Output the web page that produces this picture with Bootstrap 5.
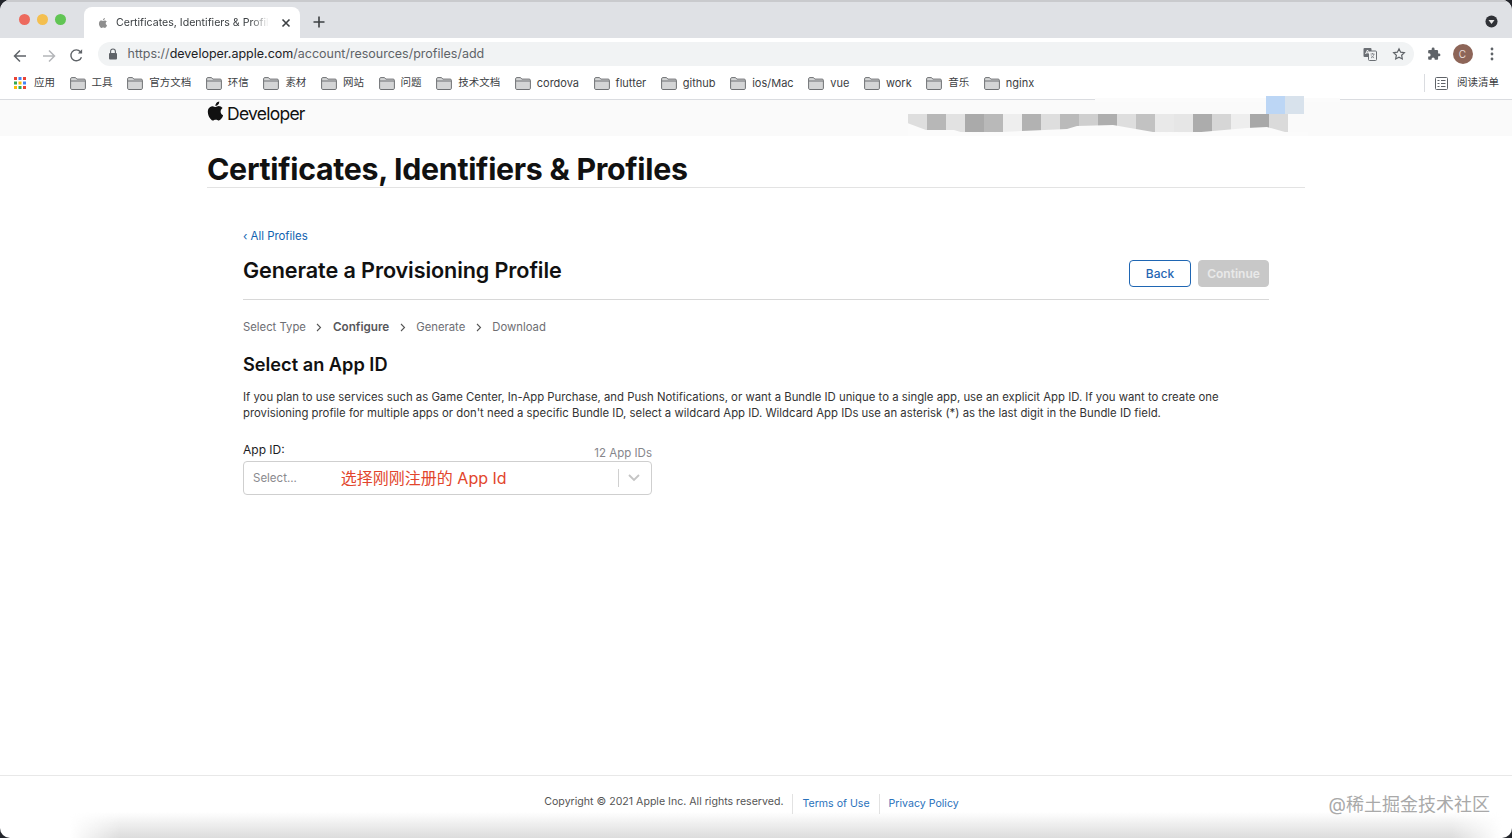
<!DOCTYPE html>
<html lang="zh">
<head>
<meta charset="utf-8">
<title>Certificates, Identifiers &amp; Profiles</title>
<link href="https://cdn.jsdelivr.net/npm/bootstrap@5.3.0/dist/css/bootstrap.min.css" rel="stylesheet">
<style>
html,body{height:838px;overflow:hidden;background:#23252b}
body{font-family:Inter,"Noto Sans CJK SC",sans-serif;color:#1d1d1f}
.win{height:838px;border-radius:10px;overflow:hidden;background:#fff;position:relative}
.tabstrip{height:38px;background:#dfe1e5;border-top:2px solid #c9cacd}
.lights{width:84px;padding-left:18.5px;gap:7px;padding-bottom:1px}
.lights i{width:11px;height:11px;border-radius:50%;display:block}
.tabx{width:216px;height:31px;background:#fff;border-radius:8px 8px 0 0;margin-top:5px;padding:0 9px 0 13px;font-size:10.6px;color:#3c4043}
.tabtitle{white-space:nowrap;-webkit-mask-image:linear-gradient(90deg,#000 88%,transparent);mask-image:linear-gradient(90deg,#000 88%,transparent)}
.stripplus{margin-left:12px;margin-top:4px}
.stripdown{margin-right:14px;margin-top:2px}
.toolbar{height:32px;background:#fff;padding-left:12px}
.navbtn{width:28.5px}
.omni{width:1316px;height:24px;border-radius:12px;background:#f1f3f4;padding:0 8px 0 10px;font-size:12.5px;color:#5f6368}
.omni b{font-weight:400;color:#202124}
.omnitext{margin-left:2px}
.bmbar{height:30px;background:#fff;border-bottom:1px solid #dadce0;padding:0 13px 3px 14px;font-size:10.5px;color:#3c4043;gap:14.6px}
.bmbar span{white-space:nowrap}
.bmbar span.latin{font-size:11px}
.bmk{gap:6px}
.readl{gap:9px;border-left:1px solid #dadce0;padding-left:10px;height:18px}
.devbar{height:36px;background:#fafafa;position:relative}
.devinner{width:1098px;height:28px;font-size:17.5px;letter-spacing:-.75px;color:#111;gap:3px}
.mosaic{position:absolute;left:908px;top:-4px;width:400px;height:40px}
.mosaic::before{content:"";position:absolute;left:187px;top:2px;width:245px;height:4px;background:#fbfbfb}
.mrow{display:flex;height:18px;position:relative}
.mrow i{display:block;width:19px;height:18px}
.blur1{margin-left:358px}
.wave{position:absolute;left:0;top:0}
.pagehead{width:1098px;height:52px;border-bottom:1px solid #e3e3e3}
.pagehead h1{font-size:30.3px;font-weight:700;line-height:1;letter-spacing:-.29px;margin:0;color:#111;padding-top:18px}
.inner{width:1026px}
.backl{font-size:11.4px;line-height:16px;color:#0f62b0;padding-top:40px;display:block;text-decoration:none}
.headrow{height:56px;border-bottom:1px solid #d8d8d8}
.headrow h2{font-size:21.6px;font-weight:600;line-height:1;margin:0;padding-top:16px;color:#111;letter-spacing:-.1px}
.btnback,.btncont{font-size:12px;line-height:1;font-weight:500;height:27px;border-radius:4px;padding:0;margin-top:16px}
.btnback{width:62px;border:1px solid #1f66b3;color:#1f66b3;background:#fff}
.btn.btncont:disabled{width:71px;border:1px solid #c8c8c8;background:#c8c8c8;color:#e9e9e9;font-weight:600;opacity:1}
.btngap{gap:7px}
.stepz{height:55px;font-size:11.3px;color:#6e6e73}
.stepz strong{font-weight:600;color:#57575b;font-size:11.7px}
.stepz svg{margin:0 10.5px}
.h3x{font-size:18.2px;font-weight:600;line-height:1;margin:0;color:#111}
.para{font-size:11.35px;line-height:16px;margin:16px 0 0;color:#333}
.fieldtop{margin-top:20px;width:409px;height:20px;font-size:12px}
.fieldtop em{font-style:normal;font-size:11.5px;color:#86868b;padding-top:4px}
.selectbox{width:409px;height:34px;border:1px solid #cfcfcf;border-radius:4px;padding-left:9px;font-size:11.5px;color:#8a8a8e}
.redtext{font-size:16px;color:#e2452c;margin-left:44px}
.selsep{width:1px;height:18px;background:#d0d0d0;margin-right:9px}
.chev{margin-right:11px}
.mainx{flex:1 1 auto}
.foot{height:63px;border-top:1px solid #e8e8e8;font-size:10.6px;color:#555;position:relative;padding-top:18px}
.foot::after{content:"";position:absolute;left:70px;right:10px;bottom:0;height:26px;background:linear-gradient(rgba(220,220,220,0),#dcdcdc);-webkit-mask-image:linear-gradient(90deg,transparent,#000 50px,#000 calc(100% - 50px),transparent);mask-image:linear-gradient(90deg,transparent,#000 50px,#000 calc(100% - 50px),transparent)}
.foot a{color:#2a72bc;text-decoration:none}
.copy{padding-right:9px;padding-top:1px}
.flink{border-left:1px solid #e2e2e2;padding:0 9px;height:20px;display:flex;align-items:center}
.wmark{position:absolute;right:22px;top:17px;font-size:18px;line-height:24px;color:#a9a9a9;z-index:1}
</style>
</head>
<body>
<div class="win d-flex flex-column">
  <div class="tabstrip d-flex align-items-center flex-shrink-0">
    <div class="lights d-flex align-items-center">
      <i style="background:#ed6a5e"></i><i style="background:#f4bf4f"></i><i style="background:#61c554"></i>
    </div>
    <div class="tabx d-flex align-items-center align-self-start">
      <svg width="12" height="12" viewBox="0 0 24 24" fill="#8f8f8f" class="flex-shrink-0" style="margin-right:7px"><path d="M18.71 19.5c-.83 1.24-1.71 2.45-3.05 2.47-1.34.03-1.77-.79-3.29-.79-1.53 0-2 .77-3.27.82-1.31.05-2.3-1.32-3.14-2.53C4.25 17 2.94 12.45 4.7 9.39c.87-1.52 2.43-2.48 4.12-2.51 1.28-.02 2.5.87 3.29.87.78 0 2.26-1.07 3.8-.91.65.03 2.47.26 3.64 1.98-.09.06-2.17 1.28-2.15 3.81.03 3.02 2.65 4.03 2.68 4.04-.03.07-.42 1.44-1.38 2.83M13 3.5c.73-.83 1.94-1.46 2.94-1.5.13 1.17-.34 2.35-1.04 3.19-.69.85-1.83 1.51-2.95 1.42-.15-1.15.41-2.35 1.05-3.11z"/></svg>
      <span class="tabtitle">Certificates, Identifiers &amp; Profil</span>
      <svg width="10" height="10" viewBox="0 0 10 10" class="ms-auto" stroke="#3c4043" stroke-width="1.6"><path d="M1.5 1.5l7 7M8.5 1.5l-7 7"/></svg>
    </div>
    <svg class="stripplus" width="14" height="14" viewBox="0 0 14 14" stroke="#3c4043" stroke-width="1.6"><path d="M7 1.5v11M1.5 7h11"/></svg>
    <svg class="ms-auto stripdown" width="13" height="13" viewBox="0 0 14 14"><circle cx="7" cy="7" r="6.5" fill="#303237"/><path d="M3.8 5.5h6.4L7 9.6z" fill="#e8e8e8"/></svg>
  </div>

  <div class="toolbar d-flex align-items-center flex-shrink-0">
    <div class="navbtn"><svg width="16" height="16" viewBox="0 0 16 16" fill="none" stroke="#5f6368" stroke-width="1.5"><path d="M14 8H2.5M8 2.5L2.5 8 8 13.5"/></svg></div>
    <div class="navbtn"><svg width="16" height="16" viewBox="0 0 16 16" fill="none" stroke="#b4b6b9" stroke-width="1.5"><path d="M2 8h11.5M8 2.5L13.5 8 8 13.5"/></svg></div>
    <div class="navbtn"><svg width="15" height="15" viewBox="0 0 16 16" fill="none" stroke="#5f6368" stroke-width="1.5"><path d="M13.3 9.8A5.8 5.8 0 1 1 12.2 4"/><path d="M14 1.2v4.6H9.4z" fill="#5f6368" stroke="none"/></svg></div>
    <div class="omni d-flex align-items-center">
      <svg width="10" height="12" viewBox="0 0 10 12" class="me-2 flex-shrink-0"><path d="M2.6 5V3.4a2.4 2.4 0 0 1 4.8 0V5" fill="none" stroke="#5f6368" stroke-width="1.1"/><rect x="1" y="5" width="8" height="6.5" rx="1" fill="#5f6368"/></svg>
      <span class="omnitext">https://<b>developer.apple.com</b>/account/resources/profiles/add</span>
      <svg class="ms-auto" width="14" height="14" viewBox="0 0 14 14"><rect x=".5" y="1" width="8" height="9" rx="1" fill="#6b6f74"/><rect x="5.5" y="4" width="8" height="9.5" rx="1" fill="#f1f3f4" stroke="#6b6f74"/><path d="M2.5 7l2-4 2 4M3.2 5.8h2.6" stroke="#fff" stroke-width=".9" fill="none"/><path d="M7.5 7h4M9.5 6v1M11 7c-.4 2-1.6 3.2-3 4M8.2 8.4c.6 1.1 1.6 2 2.9 2.5" stroke="#6b6f74" stroke-width=".7" fill="none"/></svg>
      <svg style="margin-left:15px" width="14" height="14" viewBox="0 0 24 24" fill="none" stroke="#5f6368" stroke-width="2"><path d="M12 3l2.8 5.9 6.4.8-4.7 4.4 1.2 6.4L12 17.4l-5.7 3.1 1.2-6.4-4.7-4.4 6.4-.8z"/></svg>
    </div>
    <svg style="margin-left:13px" width="14" height="14" viewBox="0 0 24 24" fill="#5f6368"><path d="M20.5 11H19V7c0-1.1-.9-2-2-2h-4V3.5a2.5 2.5 0 0 0-5 0V5H4c-1.1 0-2 .9-2 2v3.8h1.5a2.7 2.7 0 0 1 0 5.4H2V20c0 1.100.9 2 2 2h3.800v-1.500a2.700 2.700 0 0 1 5.400 0V22H17c1.100 0 2-.9 2-2v-4h1.500a2.500 2.500 0 0 0 0-5z"/></svg>
    <div class="rounded-circle d-flex align-items-center justify-content-center flex-shrink-0" style="width:20px;height:20px;background:#8d6558;color:#e9dcd6;font-size:10px;margin-left:12px">C</div>
    <svg style="margin-left:17px" width="4" height="14" viewBox="0 0 4 14" fill="#5f6368"><circle cx="2" cy="2" r="1.400"/><circle cx="2" cy="7" r="1.400"/><circle cx="2" cy="12" r="1.400"/></svg>
  </div>

  <div class="bmbar d-flex align-items-center flex-shrink-0" id="bm">
    <div class="d-flex align-items-center" style="gap:8px">
      <svg width="12" height="12" viewBox="0 0 12 12"><rect width="3" height="3" fill="#ea4335"/><rect x="4.500" width="3" height="3" fill="#4285f4"/><rect x="9" width="3" height="3" fill="#ea4335"/><rect y="4.500" width="3" height="3" fill="#34a853"/><rect x="4.500" y="4.500" width="3" height="3" fill="#fbbc05"/><rect x="9" y="4.500" width="3" height="3" fill="#4285f4"/><rect y="9" width="3" height="3" fill="#fbbc05"/><rect x="4.500" y="9" width="3" height="3" fill="#34a853"/><rect x="9" y="9" width="3" height="3" fill="#ea4335"/></svg>
      <span>应用</span>
    </div>
    <div class="bmk d-flex align-items-center"><svg width="16" height="13" viewBox="0 0 16 13"><use href="#fld"/></svg><span>工具</span></div>
    <div class="bmk d-flex align-items-center"><svg width="16" height="13" viewBox="0 0 16 13"><use href="#fld"/></svg><span>官方文档</span></div>
    <div class="bmk d-flex align-items-center"><svg width="16" height="13" viewBox="0 0 16 13"><use href="#fld"/></svg><span>环信</span></div>
    <div class="bmk d-flex align-items-center"><svg width="16" height="13" viewBox="0 0 16 13"><use href="#fld"/></svg><span>素材</span></div>
    <div class="bmk d-flex align-items-center"><svg width="16" height="13" viewBox="0 0 16 13"><use href="#fld"/></svg><span>网站</span></div>
    <div class="bmk d-flex align-items-center"><svg width="16" height="13" viewBox="0 0 16 13"><use href="#fld"/></svg><span>问题</span></div>
    <div class="bmk d-flex align-items-center"><svg width="16" height="13" viewBox="0 0 16 13"><use href="#fld"/></svg><span>技术文档</span></div>
    <div class="bmk d-flex align-items-center"><svg width="16" height="13" viewBox="0 0 16 13"><use href="#fld"/></svg><span class="latin">cordova</span></div>
    <div class="bmk d-flex align-items-center"><svg width="16" height="13" viewBox="0 0 16 13"><use href="#fld"/></svg><span class="latin">flutter</span></div>
    <div class="bmk d-flex align-items-center"><svg width="16" height="13" viewBox="0 0 16 13"><use href="#fld"/></svg><span class="latin">github</span></div>
    <div class="bmk d-flex align-items-center"><svg width="16" height="13" viewBox="0 0 16 13"><use href="#fld"/></svg><span class="latin">ios/Mac</span></div>
    <div class="bmk d-flex align-items-center"><svg width="16" height="13" viewBox="0 0 16 13"><use href="#fld"/></svg><span class="latin">vue</span></div>
    <div class="bmk d-flex align-items-center"><svg width="16" height="13" viewBox="0 0 16 13"><use href="#fld"/></svg><span class="latin">work</span></div>
    <div class="bmk d-flex align-items-center"><svg width="16" height="13" viewBox="0 0 16 13"><use href="#fld"/></svg><span>音乐</span></div>
    <div class="bmk d-flex align-items-center"><svg width="16" height="13" viewBox="0 0 16 13"><use href="#fld"/></svg><span class="latin">nginx</span></div>
    <div class="readl d-flex align-items-center ms-auto">
      <svg width="13" height="13" viewBox="0 0 13 13" fill="none" stroke="#5f6368"><rect x=".5" y=".5" width="12" height="12" rx="1"/><path d="M2.500 3.500h2M2.500 6.500h2M2.500 9.500h2M6 3.500h4.500M6 6.500h4.500M6 9.500h4.500"/></svg>
      <span>阅读清单</span>
    </div>
  </div>
  <svg width="0" height="0" class="position-absolute"><defs><g id="fld"><path d="M.6 1.800c0-.7.5-1.200 1.200-1.200h3.700l1.300 1.500h7.400c.7 0 1.200.5 1.200 1.200v8c0 .7-.5 1.200-1.200 1.200H1.800c-.7 0-1.200-.5-1.200-1.200z" fill="#d4d5d6" stroke="#6f7174" stroke-width="1"/><path d="M.8 4h14.400" stroke="#6f7174" stroke-width="1"/></g></defs></svg>

  <div class="devbar flex-shrink-0">
    <div class="devinner mx-auto d-flex align-items-center">
      <svg width="17" height="20" viewBox="3 1.500 18 21" fill="#111" style="margin-top:-7px"><path d="M18.710 19.500c-.83 1.240-1.710 2.450-3.050 2.470-1.340.03-1.770-.79-3.290-.79-1.530 0-2 .77-3.270.82-1.310.05-2.300-1.320-3.140-2.530C4.250 17 2.940 12.450 4.700 9.390c.87-1.520 2.430-2.480 4.120-2.510 1.280-.02 2.500.87 3.290.87.78 0 2.260-1.070 3.800-.91.65.03 2.470.26 3.640 1.980-.09.06-2.170 1.280-2.150 3.810.03 3.020 2.650 4.030 2.680 4.040-.03.07-.42 1.440-1.380 2.830M13 3.500c.73-.83 1.940-1.460 2.940-1.500.13 1.170-.34 2.350-1.040 3.190-.69.85-1.830 1.510-2.950 1.420-.15-1.150.41-2.350 1.050-3.110z"/></svg>
      <span>Developer</span>
    </div>
    <div class="mosaic">
      <div class="mrow blur1"><i style="background:#bcd6f5"></i><i style="background:#d8e2ec"></i></div>
      <div class="mrow">
        <i style="background:#dedede"></i><i style="background:#b7b7b7"></i><i style="background:#e2e2e2"></i><i style="background:#aaa"></i><i style="background:#b9b9b9"></i><i style="background:#eee"></i><i style="background:#b2b2b2"></i><i style="background:#dedede"></i><i style="background:#bababa"></i><i style="background:#cfcfcf"></i><i style="background:#aeaeae"></i><i style="background:#dedede"></i><i style="background:#c2c2c2"></i><i style="background:#e9e9e9"></i><i style="background:#e6e6e6"></i><i style="background:#acacac"></i><i style="background:#d6d6d6"></i><i style="background:#eee"></i><i style="background:#a8a8a8"></i><i style="background:#dadada"></i>
      </div>
      <svg class="wave" width="400" height="40" viewBox="0 0 400 40"><path d="M-1 27L18 34L46 34L56 37L94 36L159 33L169 30L205 29L245 36L282 37L339 32L359 31L377 36L400 36V40H-1z" fill="#fbfbfb"/></svg>
    </div>
  </div>

  <main class="mainx">
    <div class="pagehead mx-auto"><h1>Certificates, Identifiers &amp; Profiles</h1></div>
    <div class="inner mx-auto">
      <a class="backl" href="#">‹ All Profiles</a>
      <div class="headrow d-flex align-items-start justify-content-between">
        <h2>Generate a Provisioning Profile</h2>
        <div class="d-flex btngap">
          <button type="button" class="btn btnback">Back</button>
          <button type="button" class="btn btncont" disabled>Continue</button>
        </div>
      </div>
      <div class="stepz d-flex align-items-center">
        <span>Select Type</span>
        <svg width="6" height="9" viewBox="0 0 6 9" fill="none" stroke="#555" stroke-width="1.100"><path d="M1 1l3.500 3.500L1 8"/></svg>
        <strong>Configure</strong>
        <svg width="6" height="9" viewBox="0 0 6 9" fill="none" stroke="#555" stroke-width="1.100"><path d="M1 1l3.500 3.500L1 8"/></svg>
        <span>Generate</span>
        <svg width="6" height="9" viewBox="0 0 6 9" fill="none" stroke="#555" stroke-width="1.100"><path d="M1 1l3.500 3.500L1 8"/></svg>
        <span>Download</span>
      </div>
      <h3 class="h3x">Select an App ID</h3>
      <p class="para">If you plan to use services such as Game Center, In-App Purchase, and Push Notifications, or want a Bundle ID unique to a single app, use an explicit App ID. If you want to create one provisioning profile for multiple apps or don't need a specific Bundle ID, select a wildcard App ID. Wildcard App IDs use an asterisk (*) as the last digit in the Bundle ID field.</p>
      <div class="fieldtop d-flex justify-content-between">
        <span>App ID:</span><em>12 App IDs</em>
      </div>
      <div class="selectbox d-flex align-items-center">
        <span>Select...</span>
        <span class="redtext">选择刚刚注册的 App Id</span>
        <span class="selsep ms-auto"></span>
        <svg class="chev" width="12" height="8" viewBox="0 0 12 8" fill="none" stroke="#c4c4c4" stroke-width="1.800"><path d="M1 1l5 5 5-5"/></svg>
      </div>
    </div>
  </main>

  <footer class="foot flex-shrink-0 d-flex justify-content-center align-items-start">
    <span class="copy lh-sm">Copyright © 2021 Apple Inc. All rights reserved.</span>
    <a class="flink" href="#">Terms of Use</a>
    <a class="flink" href="#">Privacy Policy</a>
    <span class="wmark">@稀土掘金技术社区</span>
  </footer>
</div>
</body>
</html>
